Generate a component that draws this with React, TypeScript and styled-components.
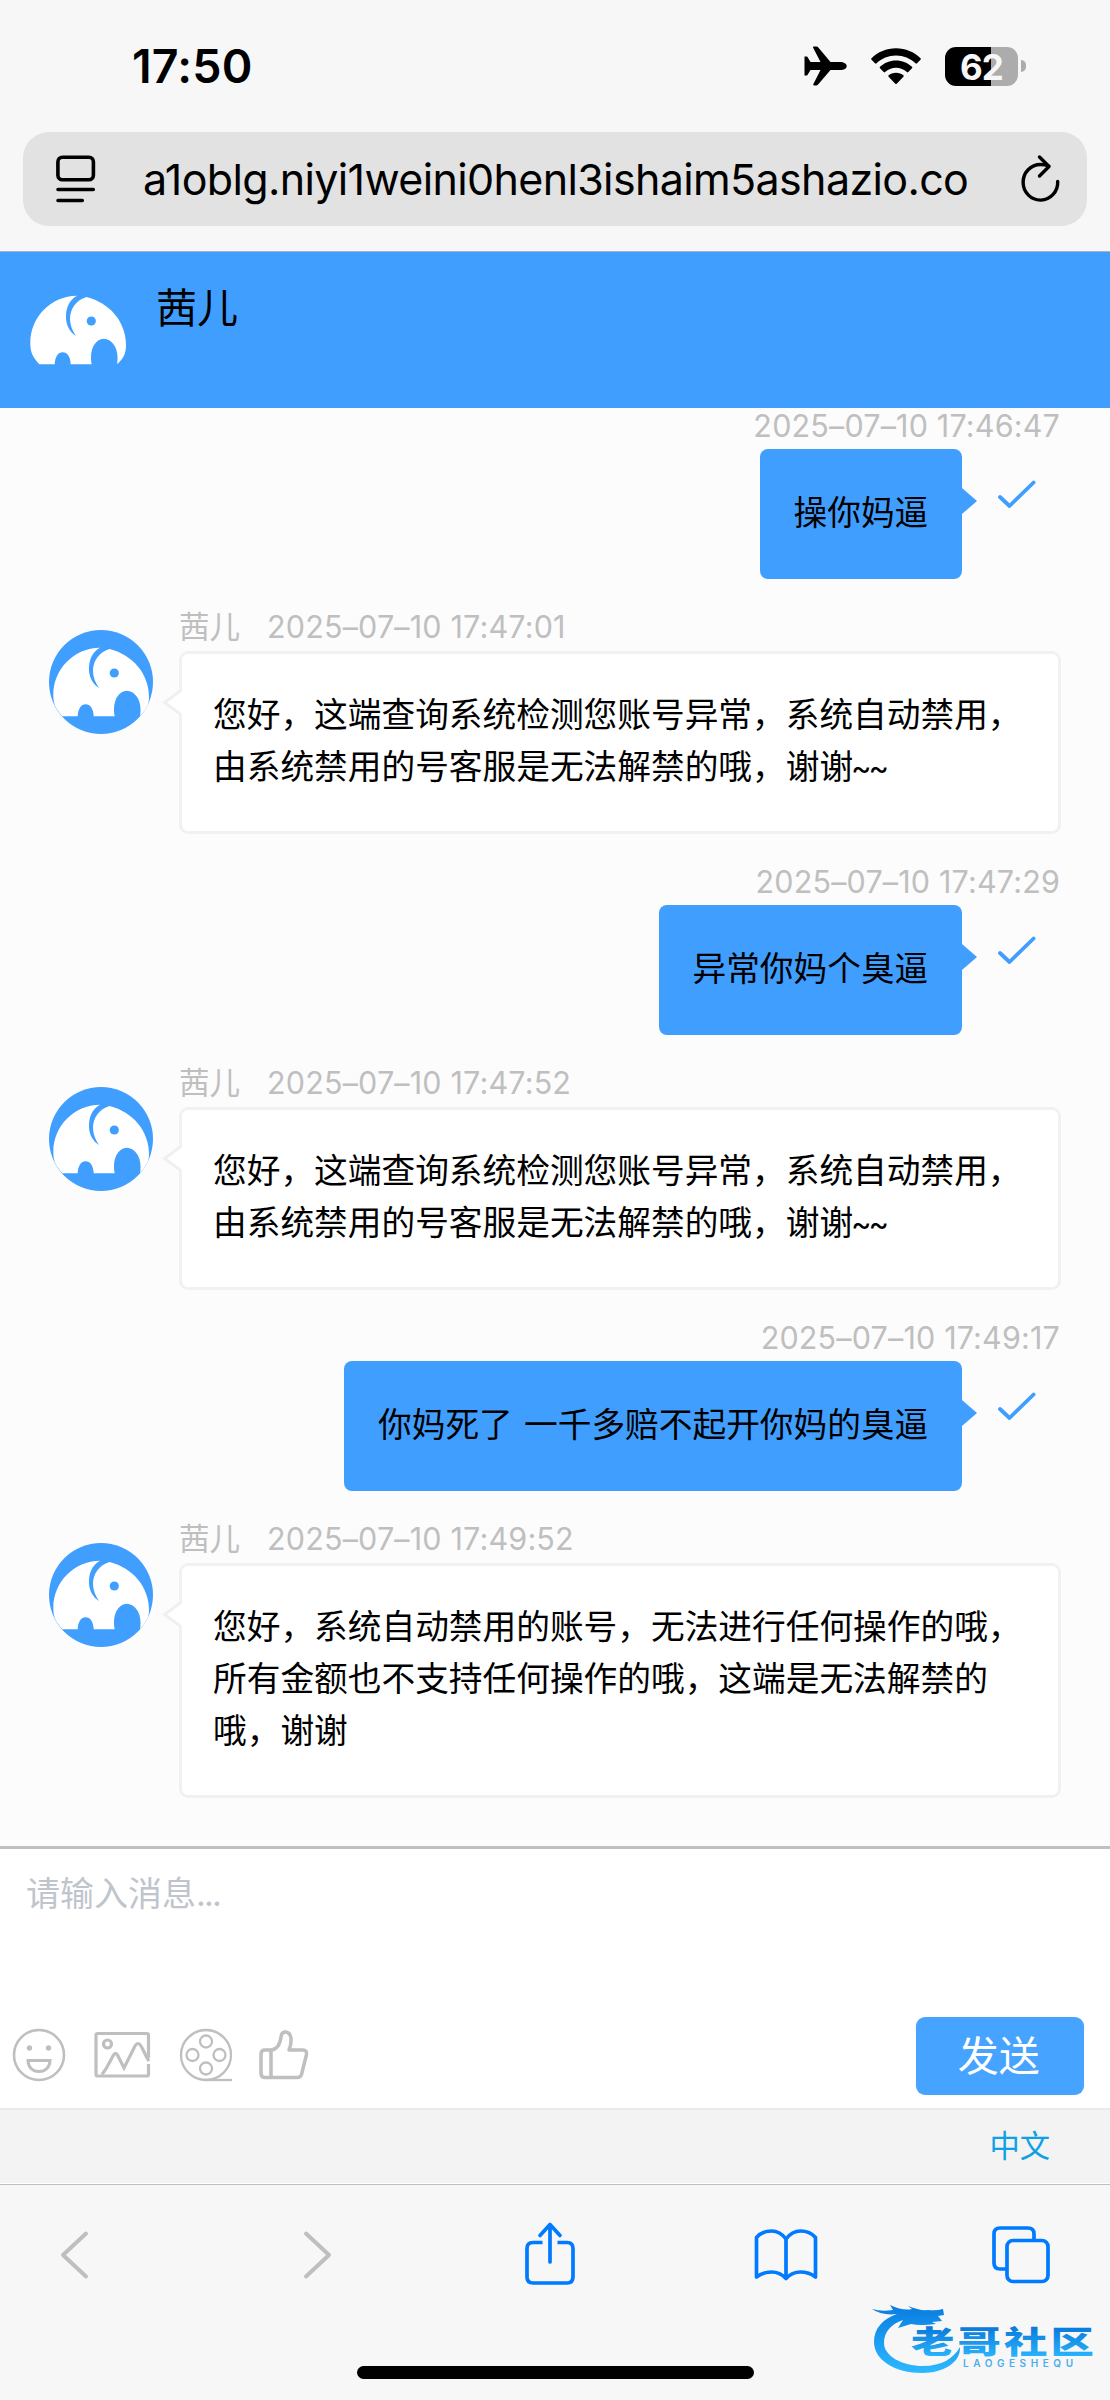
import React from 'react';
import styled, { createGlobalStyle } from 'styled-components';

const Global = createGlobalStyle`
  * { box-sizing: border-box; }
  body { margin: 0; background: #f7f7f7; font-family: Inter, "Noto Sans CJK SC", sans-serif; }
  svg { display: block; flex: none; }
`;

const Screen = styled.div`
  width: 1110px;
  height: 2400px;
  display: flex;
  flex-direction: column;
  background: #f7f7f7;
  overflow: hidden;
`;

/* ---------- status bar and address bar ---------- */

const StatusBar = styled.div`
  height: 132px;
  flex: none;
  display: flex;
  align-items: flex-start;
  justify-content: space-between;
  padding: 46px 84px 0 132px;
`;

const Clock = styled.div`
  font-size: 46.5px;
  font-weight: 600;
  line-height: 41px;
  letter-spacing: 0.2px;
  color: #000;
`;

const StatusIcons = styled.div`
  display: flex;
  align-items: center;
  height: 40px;
`;

const Battery = styled.div`
  width: 73px;
  height: 39px;
  margin-left: 24px;
  border-radius: 11px;
  background: linear-gradient(90deg, #000 46px, #acacac 46px);
  color: #f7f7f7;
  font-size: 35px;
  font-weight: 700;
  line-height: 40px;
  text-align: center;
  letter-spacing: -1px;
`;

const BatteryTip = styled.div`
  width: 5px;
  height: 12px;
  margin-left: 3px;
  border-radius: 0 5px 5px 0;
  background: #acacac;
`;

const AddressBar = styled.div`
  height: 94px;
  flex: none;
  margin: 0 23px 25px;
  padding: 0 25px 0 33px;
  border-radius: 26px;
  background: #e2e2e2;
  display: flex;
  align-items: center;
`;

const Address = styled.div`
  flex: 1;
  margin-left: 47px;
  font-size: 43px;
  line-height: 94px;
  letter-spacing: -0.64px;
  white-space: nowrap;
  color: #000;
`;

/* ---------- chat ---------- */

const ChatHeader = styled.header`
  height: 156.5px;
  flex: none;
  border-top: 1px solid #a5b4c4;
  background: #409eff;
  display: flex;
  padding: 26px;
`;

const AgentName = styled.div`
  margin-left: 26px;
  font-size: 41px;
  line-height: 60px;
  color: #000;
`;

const MessageList = styled.main`
  height: 1438.5px;
  flex: none;
  background: #fcfcfc;
  display: flex;
  flex-direction: column;
  gap: 30px;
  overflow: hidden;
`;

const OutgoingRow = styled.div`
  display: flex;
  flex-direction: column;
  align-items: flex-end;
  padding-right: 50px;
`;

const IncomingRow = styled.div`
  display: flex;
  padding: 0 49px;
`;

const Avatar = styled.div`
  width: 104px;
  height: 104px;
  flex: none;
  margin: 21.3px 26px 0 0;
  border-radius: 50%;
  overflow: hidden;
  background: #409eff;
`;

const IncomingBody = styled.div`
  flex: 1;
`;

const Meta = styled.div`
  height: 36px;
  font-size: 30.5px;
  line-height: 36px;
  color: #bfbfbf;
  white-space: nowrap;
  display: flex;
  gap: 27px;
`;

const Stamp = styled.span`
  letter-spacing: 0.17px;
`;

const OutgoingLine = styled.div`
  display: flex;
  align-items: flex-start;
  margin-top: 5.5px;
  padding-right: 22px;
`;

const OutgoingBubble = styled.div`
  position: relative;
  padding: 38px 33.7px 40.2px;
  border-radius: 8px;
  background: #409eff;
  font-size: 33.7px;
  line-height: 52px;
  word-spacing: 1.8px;
  white-space: nowrap;
  color: #000;
  &::after {
    content: '';
    position: absolute;
    left: 100%;
    top: 39px;
    border: 13px solid transparent;
    border-left: 15.5px solid #409eff;
    border-right-width: 0;
  }
`;

const IncomingBubble = styled.div`
  position: relative;
  margin-top: 6px;
  padding: 34.5px 31px 37.9px;
  border: 3px solid #f1f1f1;
  border-radius: 9px;
  background: #fff;
  font-size: 33.7px;
  line-height: 52px;
  white-space: nowrap;
  color: #000;
`;

const Tildes = styled.span`
  font-size: 31px;
  line-height: 0;
  letter-spacing: -3.2px;
  margin-left: -2px;
`;

const Pointer = styled.svg`
  position: absolute;
  left: -20px;
  top: 34px;
`;

/* ---------- composer ---------- */

const Composer = styled.section`
  height: 262px;
  flex: none;
  border-top: 3px solid #c0c0c0;
  background: #fff;
  display: flex;
  flex-direction: column;
  justify-content: space-between;
`;

const Placeholder = styled.div`
  padding: 20px 26px 0;
  font-size: 34px;
  line-height: 50px;
  color: #c0c4cc;
`;

const Ellipsis = styled.span`
  letter-spacing: -1.8px;
`;

const Tools = styled.div`
  height: 78px;
  margin-bottom: 13px;
  padding: 0 26px 0 12px;
  display: flex;
  align-items: center;
`;

const ToolIcons = styled.div`
  flex: 1;
  display: flex;
  align-items: center;
  padding-bottom: 2px;
  color: #bfbfbf;
`;

const ToolSlot = styled.span<{ $gap: number }>`
  margin-right: ${(p) => p.$gap}px;
`;

const SendButton = styled.button`
  width: 168.5px;
  height: 78px;
  padding: 0 2px 0 0;
  border: 0;
  border-radius: 9px;
  background: #46a3ff;
  color: #fff;
  font: 41px/76px Inter, "Noto Sans CJK SC", sans-serif;
`;

const LanguageBar = styled.div`
  height: 75.5px;
  flex: none;
  padding: 0 60px 0 0;
  border-top: 2px solid #eaeaea;
  border-bottom: 1px solid #fff;
  background: #f3f3f3;
  text-align: right;
  font-size: 30.3px;
  line-height: 73px;
  color: #0da1e6;
`;

/* ---------- browser toolbar ---------- */

const BrowserBar = styled.footer`
  position: relative;
  flex: 1;
  border-top: 1.5px solid #c0c0c0;
  display: flex;
  flex-direction: column;
  justify-content: space-between;
  align-items: center;
`;

const NavRow = styled.nav`
  width: 100%;
  height: 70px;
  margin-top: 35px;
  display: flex;
  align-items: center;
`;

const NavItem = styled.span<{ $before: number; $lift?: number }>`
  margin-left: ${(p) => p.$before}px;
  padding-bottom: ${(p) => p.$lift ?? 0}px;
`;

const HomeIndicator = styled.div`
  width: 397px;
  height: 13px;
  margin-bottom: 21px;
  border-radius: 7px;
  background: #000;
`;

const Watermark = styled.svg`
  position: absolute;
  right: 10px;
  bottom: 20px;
`;

const Elephant = () => (
  <svg width="104" height="104" viewBox="0 0 104 104">
    <path
      fill="#fff"
      d="M13.3 86.3C7 79 4.3 75 4.3 65C4.3 39 25 18 51 17.7C43 22 40 30 40 39C40 47 43.5 54 50 58C46.5 53 44 47 44 41C44 31 50 22 60.5 19C84 25 100 44 100 67C100 76 97 81 91 86.3C91.5 84 91.5 82 91.5 79C91.5 69 85.500 60.700 77.700 60.700C70.500 60.700 65 69 65 79C65 82 65.200 84 65.700 86.300H44.700C44.500 79 41.300 74.300 36.700 74.300C32 74.300 29 79 28.700 86.300Z"
    />
    <circle cx="65.3" cy="43" r="4.6" fill="#409eff" />
  </svg>
);

const Plane = () => (
  <svg width="43" height="40" viewBox="0 0 43 40">
    <path d="M9 1.500C9 .8 9.500.5 10.300.5H12.500C13.300.5 13.800.9 14.300 1.600L26.500 16H36C40 16 42.700 17.800 42.700 20.200C42.700 22.500 40 24 36 24H26.500L14.300 38.300C13.800 39 13.300 39.400 12.500 39.400H10.300C9.500 39.400 9 39 9.300 38.200L16.500 24H6.500L3.800 28.600C3.500 29.200 3.200 29.400 2.700 29.400H.5V10.600H2.700C3.200 10.600 3.500 10.800 3.800 11.400L6.500 16H16.500L9.300 1.900Z" />
  </svg>
);

const Wifi = () => (
  <svg width="50" height="37" viewBox="0 0 50 37">
    <path d="M25 .3C34.500.3 43.300 4 49.500 10.200C50 10.700 50 11.200 49.500 11.700L46 15.300C45.500 15.800 45 15.800 44.500 15.300C39.300 10.300 32.500 7.500 25 7.500S10.700 10.300 5.500 15.300C5 15.800 4.500 15.800 4 15.300L.5 11.700C0 11.200 0 10.700.5 10.200C6.700 4 15.500.3 25 .3Z" />
    <path d="M25 12.500C31.200 12.500 36.800 14.900 41 18.800C41.500 19.300 41.500 19.800 41 20.300L37.300 24C36.800 24.500 36.400 24.500 35.900 24C33 21.400 29.200 19.700 25 19.700S17 21.400 14.100 24C13.600 24.500 13.200 24.500 12.700 24L9 20.300C8.500 19.800 8.500 19.300 9 18.800C13.200 14.900 18.800 12.500 25 12.500Z" />
    <path d="M25 24.700C28 24.700 30.500 25.700 32.400 27.300C32.900 27.800 32.900 28.200 32.400 28.700L25.700 35.700C25.200 36.200 24.800 36.200 24.300 35.700L17.600 28.700C17.100 28.200 17.100 27.800 17.600 27.300C19.500 25.700 22 24.700 25 24.700Z" />
  </svg>
);

const Reader = () => (
  <svg width="40" height="48" viewBox="0 0 40 48" fill="none" stroke="#000" strokeWidth="3.6" strokeLinecap="round">
    <rect x="1.900" y="2.300" width="35.500" height="22.500" rx="4.500" />
    <path d="M2 34.500H37.300M2 45.500H26.300" />
  </svg>
);

const Reload = () => (
  <svg width="42" height="50" viewBox="0 0 42 50" fill="none" stroke="#000" strokeWidth="3.4" strokeLinecap="round" strokeLinejoin="round">
    <path d="M37.700 27.500A17.300 17.800 0 1 1 20.500 10.500Q25 10.500 29 12M19.500 3L29 12.500L19.500 22" />
  </svg>
);

const Check = () => (
  <svg width="60" height="70" viewBox="0 0 60 70" fill="none" stroke="#409eff" strokeWidth="3.8" strokeLinecap="round" strokeLinejoin="round">
    <path d="M14 48L23.500 57L47.600 33.500" />
  </svg>
);

const CheckSlot = styled.div`
  width: 76px;
  padding-left: 24px;
`;

const Outgoing = ({ time, text }: { time: string; text: string }) => (
  <OutgoingRow>
    <Meta><Stamp>{time}</Stamp></Meta>
    <OutgoingLine>
      <OutgoingBubble>{text}</OutgoingBubble>
      <CheckSlot><Check /></CheckSlot>
    </OutgoingLine>
  </OutgoingRow>
);

const Incoming = ({ time, lines, tail }: { time: string; lines: string[]; tail?: string }) => (
  <IncomingRow>
    <Avatar><Elephant /></Avatar>
    <IncomingBody>
      <Meta><span>茜儿</span><Stamp>{time}</Stamp></Meta>
      <IncomingBubble>
        <Pointer width="22" height="30" viewBox="0 0 22 30">
          <path d="M20 2V28L2.500 15Z" fill="#fff" />
          <path d="M19.500 2L2.500 14.500L19.500 27" fill="none" stroke="#f0f0f0" strokeWidth="3" />
          <path d="M18.500 4H22V25H18.500Z" fill="#fff" />
        </Pointer>
        {lines.map((l, i) => (
          <div key={l}>{l}{tail && i === lines.length - 1 && <Tildes>{tail}</Tildes>}</div>
        ))}
      </IncomingBubble>
    </IncomingBody>
  </IncomingRow>
);

const BLUE = '#007aff';

export default function App() {
  return (
    <Screen>
      <Global />
      <StatusBar>
        <Clock>17:50</Clock>
        <StatusIcons>
          <Plane />
          <ToolSlot $gap={24} />
          <Wifi />
          <Battery>62</Battery>
          <BatteryTip />
        </StatusIcons>
      </StatusBar>
      <AddressBar>
        <Reader />
        <Address>a1oblg.niyi1weini0henl3ishaim5ashazio.co</Address>
        <Reload />
      </AddressBar>

      <ChatHeader>
        <Elephant />
        <AgentName>茜儿</AgentName>
      </ChatHeader>

      <MessageList>
        <Outgoing time="2025–07–10 17:46:47" text="操你妈逼" />
        <Incoming time="2025–07–10 17:47:01" lines={['您好，这端查询系统检测您账号异常，系统自动禁用，', '由系统禁用的号客服是无法解禁的哦，谢谢']} tail="~~" />
        <Outgoing time="2025–07–10 17:47:29" text="异常你妈个臭逼" />
        <Incoming time="2025–07–10 17:47:52" lines={['您好，这端查询系统检测您账号异常，系统自动禁用，', '由系统禁用的号客服是无法解禁的哦，谢谢']} tail="~~" />
        <Outgoing time="2025–07–10 17:49:17" text="你妈死了 一千多赔不起开你妈的臭逼" />
        <Incoming time="2025–07–10 17:49:52" lines={['您好，系统自动禁用的账号，无法进行任何操作的哦，', '所有金额也不支持任何操作的哦，这端是无法解禁的', '哦，谢谢']} />
      </MessageList>

      <Composer>
        <Placeholder>请输入消息<Ellipsis>...</Ellipsis></Placeholder>
        <Tools>
          <ToolIcons>
            <ToolSlot $gap={28}>
              <svg width="54" height="54" viewBox="0 0 54 54" fill="none" stroke="currentColor" strokeWidth="2.6">
                <circle cx="27" cy="27" r="25" />
                <circle cx="17.500" cy="20" r="2.700" fill="currentColor" stroke="none" />
                <circle cx="36.500" cy="20" r="2.700" fill="currentColor" stroke="none" />
                <path d="M16 32.500H38C38 39 33.500 43.500 27 43.500S16 39 16 32.500Z" strokeWidth="3" />
              </svg>
            </ToolSlot>
            <ToolSlot $gap={28}>
              <svg width="57" height="48" viewBox="0 0 57 48" fill="none" stroke="currentColor" strokeWidth="3.2">
                <path d="M54.500 27V4Q54.500 2.500 53 2.500H3.500Q2 2.500 2 4V43.500Q2 45 3.500 45H53Q54.500 45 54.500 43.500V33" />
                <circle cx="13.500" cy="13" r="4" />
                <path d="M8 43.500C14 36 16 30 19.500 24Q21.500 20.500 23.500 24L30 37L41 15Q44 10 47 15C50 20 52 26 55 30" />
              </svg>
            </ToolSlot>
            <ToolSlot $gap={26}>
              <svg width="54" height="54" viewBox="0 0 54 54" fill="none" stroke="currentColor" strokeWidth="2.3">
                <circle cx="27" cy="27" r="25" />
                <circle cx="27" cy="13.500" r="6" />
                <circle cx="27" cy="40.500" r="6" />
                <circle cx="13.500" cy="27" r="6" />
                <circle cx="40.500" cy="27" r="6" />
                <path d="M27 52H53" />
              </svg>
            </ToolSlot>
            <ToolSlot $gap={0}>
              <svg width="50" height="50" viewBox="0 0 50 50" fill="none" stroke="currentColor" strokeWidth="3.5" strokeLinejoin="round">
                <path d="M12 20H6Q2 20 2 24V43.500Q2 47.500 6 47.500H38.500Q41.500 47.500 42.500 44.500L47.500 24.500Q48 20 44 20H30Q32.500 14 32 8Q31 2 26 2Q23 2 22.200 6C21.500 11 21 13 19 16Q16 20 12 20V47" />
              </svg>
            </ToolSlot>
          </ToolIcons>
          <SendButton>发送</SendButton>
        </Tools>
      </Composer>
      <LanguageBar>中文</LanguageBar>

      <BrowserBar>
        <NavRow>
          <NavItem $before={59}>
            <svg width="30" height="50" viewBox="0 0 30 50" fill="none" stroke="#bfbfbf" strokeWidth="4" strokeLinecap="round" strokeLinejoin="round">
              <path d="M27 3.500L4 25L27 46.500" />
            </svg>
          </NavItem>
          <NavItem $before={213.5}>
            <svg width="30" height="50" viewBox="0 0 30 50" fill="none" stroke="#bfbfbf" strokeWidth="4" strokeLinecap="round" strokeLinejoin="round">
              <path d="M3 3.500L26 25L3 46.500" />
            </svg>
          </NavItem>
          <NavItem $before={192.5} $lift={4}>
            <svg width="50" height="64" viewBox="0 0 50 64" fill="none" stroke={BLUE} strokeWidth="3.7" strokeLinecap="round" strokeLinejoin="round">
              <path d="M17.500 21.500H8Q2 21.500 2 27.500V56Q2 62 8 62H42Q48 62 48 56V27.500Q48 21.500 42 21.500H32.500" strokeLinecap="butt" />
              <path d="M25 41V4M15 14.500L25 3.500L35 14.500" />
            </svg>
          </NavItem>
          <NavItem $before={179}>
            <svg width="64" height="54" viewBox="0 0 64 54" fill="none" stroke={BLUE} strokeWidth="3.7" strokeLinecap="round" strokeLinejoin="round">
              <path d="M32 11Q26 3 17.500 3Q8 3 2.500 9.500V49Q9 44 17.500 44Q26 44 32 50.500Q38 44 46.500 44Q55 44 61.500 49V9.500Q56 3 46.500 3Q38 3 32 11V50" />
            </svg>
          </NavItem>
          <NavItem $before={171.5}>
            <svg width="60" height="58" viewBox="0 0 60 58" fill="none" stroke={BLUE} strokeWidth="3.7">
              <path d="M44 13V8Q44 2 38 2H10Q4 2 4 8V37Q4 43 10 43H16" />
              <rect x="17" y="14.500" width="41" height="41" rx="6" />
            </svg>
          </NavItem>
        </NavRow>
        <HomeIndicator />
        <Watermark width="230" height="76" viewBox="870 2304 230 76">
          <defs>
            <linearGradient id="wm" x1="0" y1="2308" x2="0" y2="2372" gradientUnits="userSpaceOnUse">
              <stop offset="0" stopColor="#0a7fe2" />
              <stop offset="1" stopColor="#2bb8ff" />
            </linearGradient>
            <linearGradient id="wmText" x1="0" y1="0" x2="0" y2="1">
              <stop offset="0.2" stopColor="#0876da" />
              <stop offset="0.9" stopColor="#2bb4fb" />
            </linearGradient>
          </defs>
          <g fill="url(#wm)">
            <path d="M872 2309Q882 2312 893 2310L890 2305Q903 2311 912 2309L908 2306Q920 2311 928 2310Q936 2311 943 2309L944 2315L938 2316L942 2321L932 2322L936 2324Q920 2326 911 2324L898 2328L903 2320C891 2324 884 2332 884 2343C884 2356 902 2366 923 2366C942 2366 954 2358 960 2347C961 2362 944 2373 922 2373C895 2373 874 2360 874 2342C874 2328 883 2319 897 2314Q882 2316 872 2309Z" />
          </g>
          <g fill="url(#wmText)" fontFamily='"Noto Sans CJK SC", sans-serif' fontWeight="900">
            <text transform="translate(911 2352.500) scale(1.4 1)" fontSize="31" letterSpacing="2.200">老哥社区</text>
          </g>
          <text x="963" y="2366.500" fontSize="10" fontFamily="Inter, sans-serif" fontWeight="600" fill="#49aef0" textLength="110" lengthAdjust="spacing">LAOGESHEQU</text>
        </Watermark>
      </BrowserBar>
    </Screen>
  );
}
